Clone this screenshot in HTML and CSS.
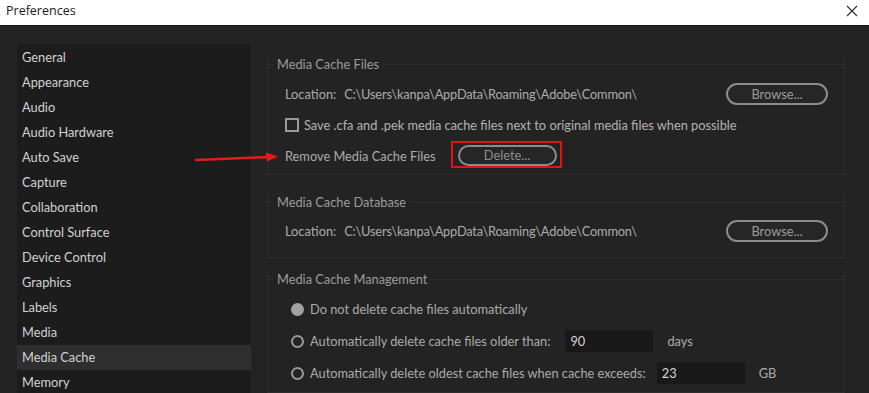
FILE: index.html
```html
<!DOCTYPE html>
<html>
<head>
<meta charset="utf-8">
<link rel="stylesheet" href="styles.css">
</head>
<body>
<div class="titlebar">
  <span class="title">Preferences</span>
  <svg class="close" width="12" height="12" viewBox="0 0 12 12"><path d="M1 1L11 11M11 1L1 11" stroke="#333" stroke-width="1.2" fill="none"/></svg>
</div>
<div class="window">
  <ul class="sidebar">
    <li>General</li>
    <li>Appearance</li>
    <li>Audio</li>
    <li>Audio Hardware</li>
    <li>Auto Save</li>
    <li>Capture</li>
    <li>Collaboration</li>
    <li>Control Surface</li>
    <li>Device Control</li>
    <li>Graphics</li>
    <li>Labels</li>
    <li>Media</li>
    <li class="selected">Media Cache</li>
    <li>Memory</li>
  </ul>
  <div class="content">
    <div class="group g1">
      <div class="group-head"><span>Media Cache Files</span></div>
      <div class="row split">
        <div class="loc"><span class="label">Location:</span><span class="path">C:\Users\kanpa\AppData\Roaming\Adobe\Common\</span></div>
        <button class="pill">Browse...</button>
      </div>
      <div class="row">
        <span class="checkbox"></span><span class="check-text">Save .cfa and .pek media cache files next to original media files when possible</span>
      </div>
      <div class="row">
        <span class="remove">Remove Media Cache Files</span>
        <span class="highlight"><button class="pill delete">Delete...</button></span>
      </div>
    </div>
    <div class="group g2">
      <div class="group-head"><span>Media Cache Database</span></div>
      <div class="row split">
        <div class="loc"><span class="label">Location:</span><span class="path">C:\Users\kanpa\AppData\Roaming\Adobe\Common\</span></div>
        <button class="pill">Browse...</button>
      </div>
    </div>
    <div class="group g3">
      <div class="group-head"><span>Media Cache Management</span></div>
      <div class="row radio-row">
        <span class="radio on"></span><span>Do not delete cache files automatically</span>
      </div>
      <div class="row radio-row">
        <span class="radio"></span><span>Automatically delete cache files older than:</span>
        <span class="field f1">90</span><span class="unit">days</span>
      </div>
      <div class="row radio-row">
        <span class="radio"></span><span>Automatically delete oldest cache files when cache exceeds:</span>
        <span class="field f2">23</span><span class="unit">GB</span>
      </div>
    </div>
  </div>
  <svg class="arrow" width="90" height="14" viewBox="0 0 90 14"><path d="M2 10 L76 7" stroke="#e31b1b" stroke-width="2.6" stroke-linecap="round"/><path d="M72 2.5 L84 6.6 L73 11.5 Z" fill="#e31b1b"/></svg>
</div>
</body>
</html>
```
FILE: styles.css
```css
* { box-sizing: border-box; }
html, body { margin: 0; padding: 0; }
body {
  width: 869px;
  height: 393px;
  overflow: hidden;
  background: #232323;
  font-family: Lato, "Noto Sans", sans-serif;
  font-size: 12.8px;
}
.titlebar {
  height: 26px;
  background: #ffffff;
  border-bottom: 1px solid #161616;
  display: flex;
  align-items: center;
  justify-content: space-between;
  padding: 0 11px 0 6px;
}
.title {
  font-family: "Open Sans", "Noto Sans", sans-serif;
  font-size: 12.5px;
  color: #202020;
  margin-top: -4px;
}
.close { margin-top: -4px; }
.window {
  position: relative;
  display: flex;
  padding: 18px 0 0 17px;
  height: 367px;
}
.sidebar {
  list-style: none;
  margin: 0;
  padding: 1px 0 0 0;
  width: 235px;
  flex: none;
  background: #1c1c1c;
  border-right: 1px solid #262626;
}
.sidebar li {
  height: 25px;
  line-height: 25px;
  padding-left: 5px;
  color: #d2d2d2;
  white-space: nowrap;
}
.sidebar li.selected { background: #2e2e2e; }
.content {
  flex: 1;
  padding: 12px 24px 0 15px;
  display: flex;
  flex-direction: column;
}
.group {
  border: 1px solid #2d2d2d;
  border-top: none;
  padding: 0 16px 3px 17px;
}
.group-head {
  display: flex;
  align-items: center;
  height: 16px;
  margin: 0 -17px 6px -18px;
  color: #9c9c9c;
}
.group-head::before {
  content: "";
  width: 6px;
  border-top: 1px solid #2d2d2d;
}
.group-head::after {
  content: "";
  flex: 1;
  border-top: 1px solid #2d2d2d;
  margin-right: -1px;
}
.group-head span { padding: 0 4px; }
.g2 { margin-top: 19px; padding-bottom: 11px; }
.g2 .group-head { margin-bottom: 5px; }
.g3 { margin-top: 13px; }
.row {
  height: 31px;
  display: flex;
  align-items: center;
  color: #ababab;
  white-space: nowrap;
}
.split { justify-content: space-between; }
.loc .label { margin-right: 8px; }
.path { letter-spacing: -0.18px; }
.pill {
  font-family: inherit;
  font-size: 12.8px;
  color: #9d9d9d;
  background: #262626;
  border: 2px solid #8c8c8c;
  border-radius: 12px;
  width: 102px;
  height: 22px;
  padding: 0;
  line-height: 18px;
}
.checkbox {
  width: 14px;
  height: 14px;
  border: 2px solid #9a9a9a;
  margin-right: 5px;
  flex: none;
}
.check-text { color: #b3b3b3; }
.highlight {
  margin-left: 15px;
  border: 2px solid #e01414;
  padding: 2px 3px 0 5px;
  display: flex;
  margin-top: -2px;
}
.delete { width: 99px; height: 21px; line-height: 17px; color: #8f8f8f; }
.g3 .row { height: 32px; }
.radio {
  width: 13px;
  height: 13px;
  border-radius: 50%;
  border: 2px solid #9a9a9a;
  margin: 0 6px 0 6px;
  flex: none;
}
.radio.on { background: #a3a3a3; border-color: #a3a3a3; }
.field {
  width: 88px;
  height: 22px;
  background: #181818;
  color: #d5d5d5;
  padding-left: 5px;
  line-height: 22px;
}
.f1 { margin-left: 15px; }
.f2 { margin-left: 11px; }
.unit { margin-left: 14px; }
.arrow {
  position: absolute;
  left: 194px;
  top: 124px;
}
```
